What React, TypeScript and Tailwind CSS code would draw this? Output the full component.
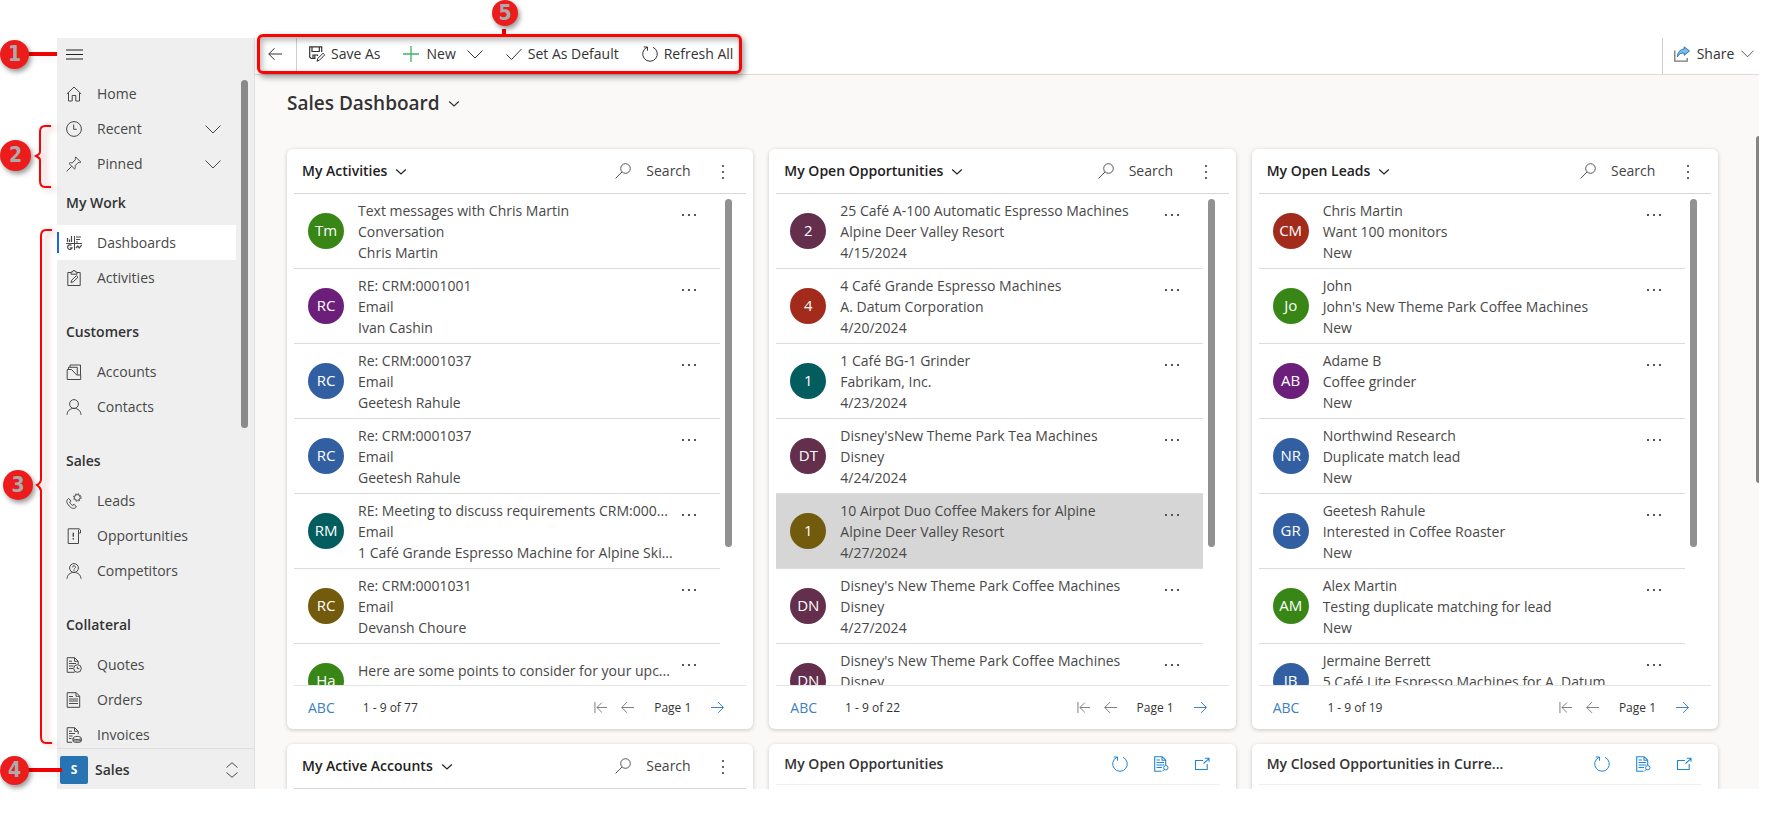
import React from "react";

type IconProps = { className?: string; children: React.ReactNode; box?: number };

function Icon({ className = "size-4", children, box = 16 }: IconProps) {
  return (
    <svg
      viewBox={`0 0 ${box} ${box}`}
      className={`shrink-0 ${className}`}
      fill="none"
      stroke="currentColor"
      strokeWidth="1"
      aria-hidden="true"
    >
      {children}
    </svg>
  );
}

const ChevronWide = ({ className = "size-4" }: { className?: string }) => (
  <Icon className={className}>
    <path d="M.5 4.500 8 12l7.500-7.500" />
  </Icon>
);

const ChevronSmall = () => (
  <Icon className="size-3" box={12}>
    <path d="M1.200 4.500 6 9l4.800-4.500" strokeWidth="1.200" />
  </Icon>
);

const SearchIcon = () => (
  <Icon className="size-4">
    <circle cx="10.500" cy="5.500" r="4.800" />
    <path d="M7 9 .6 15.400" />
  </Icon>
);

const ArrowLeft = ({ className = "size-3.5" }: { className?: string }) => (
  <Icon className={className} box={14}>
    <path d="M14 7H.8M6.500 1.200.8 7l5.700 5.800" />
  </Icon>
);

const ArrowFirst = () => (
  <Icon className="size-[13px]" box={14}>
    <path d="M1 1v12M14 7H3M8.500 1.700 3.200 7l5.300 5.300" />
  </Icon>
);

const ArrowRight = () => (
  <Icon className="size-[13px]" box={14}>
    <path d="M0 7h13.200M7.700 1.200 13.400 7l-5.700 5.800" />
  </Icon>
);

const RefreshIcon = ({ className = "size-4" }: { className?: string }) => (
  <Icon className={className}>
    <path d="M5 1.300A7.300 7.300 0 1 0 11 1.300" />
    <path d="M1.800 1h3.700v3.700" />
  </Icon>
);

const navIcons: Record<string, React.ReactNode> = {
  Home: <path d="M.8 8 8 1l7.200 7M2.500 6.500v8.500h3.700V9.500h3.600V15h3.700V6.500" />,
  Recent: (
    <>
      <circle cx="8" cy="8" r="7.400" />
      <path d="M7.700 3.500v4.800h3" />
    </>
  ),
  Pinned: (
    <path d="m.6 15.400 5-5M3 7.500l5.700 5.600c.8-1.200.8-2.300.3-3.300l3.200-3.300c.9.300 1.700.2 2.700-.3L9.700 1c-.5 1-.6 1.900-.3 2.700L6.200 7C5.200 6.500 4.100 6.600 3 7.500Z" />
  ),
  Dashboards: (
    <>
      <path d="M0 8.500h16M8.500 1v14" />
      <path d="M1.500 3v4M3.500 4.500V7M5.500 1v6M10 2h5M10 4.500h4M10 7h2" strokeWidth="1.200" />
      <path d="M5.500 10.500a2.300 2.300 0 1 0 .6 2.400H3.800M10 13l1.800-2 1.400 2 2.500-3M2 10.500v1" strokeWidth="1.200" />
    </>
  ),
  Activities: (
    <>
      <path d="M5 2.500H1.800v13h12.400v-13H11M5 4.200h6V2H9.500a1.500 1.500 0 0 0-3 0H5Z" />
      <path d="m5 12.500.7-2.300 4.700-4.600 1.600 1.600-4.700 4.600Z" />
    </>
  ),
  Accounts: (
    <>
      <path d="M1.200 5.500v10h13.500v-4.500h-4L5.500 5.500Z" />
      <path d="M2.500 5.200V3.300h8.800v7.200M4 3.200V1h10.500v10" />
    </>
  ),
  Contacts: (
    <>
      <circle cx="8" cy="5" r="4.400" />
      <path d="M1 15.800C1.200 12 4 9.400 8 9.400s6.800 2.600 7 6.400" />
    </>
  ),
  Leads: (
    <>
      <path d="M2.500 5.500C.2 7.500.3 9.300 2.400 12c2.500 3.300 5.500 4.600 8 2l-2.200-2.600-1.800.9c-1.500-.9-2.400-2-2.600-3.500l1.300-1Z" />
      <circle cx="11.300" cy="4.500" r="2.900" />
      <circle cx="11.300" cy="4.500" r="3.800" strokeDasharray="1.500 1.500" />
    </>
  ),
  Opportunities: (
    <>
      <path d="M12.500 4.500v11H2.200V.8h11M12.500 5h2V2a1.200 1.200 0 0 0-2 0Z" />
      <path d="M7.300 4.800v4M7.300 10v1.500" strokeWidth="1.400" />
    </>
  ),
  Competitors: (
    <>
      <circle cx="8" cy="5" r="4.400" />
      <path d="M1 15.800C1.200 12 4 9.400 8 9.400s6.800 2.600 7 6.400M6.500 4.300c0-2 3-2 3 0C9.500 5.300 8 5.300 8 6.500M8 7v1" />
    </>
  ),
  Quotes: (
    <>
      <path d="M8.500 15.300H1.200V.7h7.500l3.500 3.500v3M8.500.8v3.500h3.600" />
      <path d="M3 6.500h7M3 9h4.500M3 11.500h4M3 4.200h3" />
      <circle cx="11.500" cy="11.500" r="3.800" />
      <path d="M11.300 9.500v2.200h2" />
    </>
  ),
  Orders: (
    <>
      <path d="M1.200.7h9l3.500 3.500v11.100H1.200ZM10 .8v3.500h3.600" />
      <path d="M3 4.500h4M3 7h9M3 9h9M3 11.500h9" />
    </>
  ),
  Invoices: (
    <>
      <path d="M6 15.300H1.200V.7h7.500l3.500 3.500v3M8.500.8v3.500h3.600" />
      <path d="M3 6.500h6M3 9h3.500M3 11.500h2.500M3 4.200h3" />
      <path d="M7 11.300c0-2.500 8.300-2.500 8.300 0v2.900c0 1.600-8.300 1.600-8.300 0ZM7 11.300c0 1.600 8.300 1.600 8.300 0M7 12.800c0 1.600 8.300 1.600 8.300 0" />
    </>
  ),
};

function NavItem({ label, active, expandable }: { label: string; active?: boolean; expandable?: boolean }) {
  return (
    <li>
      <a
        href="#"
        aria-current={active ? "page" : undefined}
        className={`relative flex h-[35px] items-center gap-[15px] pr-[15px] pl-[9px] ${active ? "bg-white" : ""}`}
      >
        {active && <span className="absolute top-[7px] left-0 h-[21px] w-[2px] bg-[#1666ee]" />}
        <Icon className="size-4">{navIcons[label]}</Icon>
        <span className="grow">{label}</span>
        {expandable && <ChevronWide />}
      </a>
    </li>
  );
}

const navGroups = [
  { title: "My Work", items: ["Dashboards", "Activities"] },
  { title: "Customers", items: ["Accounts", "Contacts"] },
  { title: "Sales", items: ["Leads", "Opportunities", "Competitors"] },
  { title: "Collateral", items: ["Quotes", "Orders", "Invoices"] },
];

function Sidebar() {
  return (
    <aside className="flex w-[198px] shrink-0 flex-col border-r border-[#e0e0e0] bg-[#efefef] text-[#484848]">
      <button aria-label="Toggle navigation" className="flex h-[38px] shrink-0 items-center pb-[6px] pl-[9px] text-[#222]">
        <Icon className="h-[11px] w-[17px]">
          <path d="M-5 1.500h26M-5 8h26M-5 14.500h26" strokeWidth="1.700" />
        </Icon>
      </button>
      <div className="flex min-h-0 grow overflow-hidden">
        <nav className="grow">
          <ul>
            <NavItem label="Home" />
            <NavItem label="Recent" expandable />
            <NavItem label="Pinned" expandable />
          </ul>
          {navGroups.map((group, i) => (
            <section key={group.title} className={i > 0 ? "mt-[15px]" : ""}>
              <h2 className="flex h-11 items-center pl-[9px] font-semibold text-[#333]">{group.title}</h2>
              <ul>
                {group.items.map((item) => (
                  <NavItem key={item} label={item} active={item === "Dashboards"} />
                ))}
              </ul>
            </section>
          ))}
        </nav>
        <div className="w-[18px] shrink-0 pt-1 pl-[5px]">
          <div className="h-[348px] w-[7px] rounded-full bg-[#8a8a8a]" />
        </div>
      </div>
      <button className="flex h-[41px] shrink-0 items-center border-t border-[#dedede] pt-[2px] pr-[14px] pl-[3px] text-left">
        <span className="flex size-7 items-center justify-center rounded-xs bg-[#2874b2] text-xs font-bold text-white">S</span>
        <span className="grow pl-[7px] font-semibold text-[#333]">Sales</span>
        <Icon className="size-4">
          <path d="M2.500 5.500 8 .7l5.500 4.800M2.500 10.500 8 15.300l5.500-4.800" />
        </Icon>
      </button>
    </aside>
  );
}

function Toolbar() {
  return (
    <header className="flex h-[37px] shrink-0 items-stretch border-b border-[#dddcdb] bg-white text-[#333]">
      <button aria-label="Back" className="flex w-[42px] items-center border-r border-[#cfcfcf] pb-1 pl-[13px]">
        <ArrowLeft />
      </button>
      <div className="flex grow items-center gap-[23px] pb-[5px] pl-3">
        <button className="flex items-center gap-[6px]">
          <Icon>
            <path d="M6.500 12.500H2.200L.7 11V.8h12V6M3 .8v4.700h7.300V.8M4 12.500V9h4.500v1M5.800 9.500v2.500" strokeWidth="1.200" />
            <path d="m8 15.200.8-2.700 5.200-5.300 1.700 1.700-5.200 5.300Z" />
          </Icon>
          Save As
        </button>
        <button className="flex items-center gap-[7px]">
          <Icon className="size-4 text-[#3bb565]">
            <path d="M0 8h16M8 0v16" strokeWidth="1.300" />
          </Icon>
          <span className="pr-1">New</span>
          <ChevronWide />
        </button>
        <button className="flex items-center gap-[6px]">
          <Icon>
            <path d="m.5 8.500 5 5L15.500 3" />
          </Icon>
          Set As Default
        </button>
        <button className="flex items-center gap-[6px]">
          <RefreshIcon />
          Refresh All
        </button>
      </div>
      <button className="flex w-[97px] items-center justify-between border-l border-[#cfcfcf] pr-[5px] pb-[5px] pl-[11px]">
        <Icon>
          <path d="M.8 4.500v10.700h12.400V12" strokeWidth="1.300" stroke="#777" />
          <path d="M10.200.8 15.500 5l-5.300 4.300V7C7 6.800 4.800 7.700 3.300 11 3.500 6.500 6 3.300 10.200 3Z" fill="#7cbdec" stroke="#2f77b8" />
        </Icon>
        <span>Share</span>
        <ChevronWide className="size-[13px]" />
      </button>
    </header>
  );
}

type Row = { initials: string; color: string; lines: string[]; selected?: boolean };

const GREEN = "bg-[#388716]";
const PURPLE = "bg-[#6b1f7a]";
const BLUE = "bg-[#325fa2]";
const TEAL = "bg-[#035d5f]";
const BROWN = "bg-[#735b0d]";
const PLUM = "bg-[#632f4c]";
const RED = "bg-[#a32b1b]";

const activities: Row[] = [
  { initials: "Tm", color: GREEN, lines: ["Text messages with Chris Martin", "Conversation", "Chris Martin"] },
  { initials: "RC", color: PURPLE, lines: ["RE: CRM:0001001", "Email", "Ivan Cashin"] },
  { initials: "RC", color: BLUE, lines: ["Re: CRM:0001037", "Email", "Geetesh Rahule"] },
  { initials: "RC", color: BLUE, lines: ["Re: CRM:0001037", "Email", "Geetesh Rahule"] },
  { initials: "RM", color: TEAL, lines: ["RE: Meeting to discuss requirements CRM:000...", "Email", "1 Café Grande Espresso Machine for Alpine Ski..."] },
  { initials: "RC", color: BROWN, lines: ["Re: CRM:0001031", "Email", "Devansh Choure"] },
  { initials: "Ha", color: GREEN, lines: ["Here are some points to consider for your upc...", "\u00a0"] },
];

const opportunities: Row[] = [
  { initials: "2", color: PLUM, lines: ["25 Café A-100 Automatic Espresso Machines", "Alpine Deer Valley Resort", "4/15/2024"] },
  { initials: "4", color: RED, lines: ["4 Café Grande Espresso Machines", "A. Datum Corporation", "4/20/2024"] },
  { initials: "1", color: TEAL, lines: ["1 Café BG-1 Grinder", "Fabrikam, Inc.", "4/23/2024"] },
  { initials: "DT", color: PLUM, lines: ["Disney'sNew Theme Park Tea Machines", "Disney", "4/24/2024"] },
  { initials: "1", color: BROWN, lines: ["10 Airpot Duo Coffee Makers for Alpine", "Alpine Deer Valley Resort", "4/27/2024"], selected: true },
  { initials: "DN", color: PLUM, lines: ["Disney's New Theme Park Coffee Machines", "Disney", "4/27/2024"] },
  { initials: "DN", color: PLUM, lines: ["Disney's New Theme Park Coffee Machines", "Disney", "\u00a0"] },
];

const leads: Row[] = [
  { initials: "CM", color: RED, lines: ["Chris Martin", "Want 100 monitors", "New"] },
  { initials: "Jo", color: GREEN, lines: ["John", "John's New Theme Park Coffee Machines", "New"] },
  { initials: "AB", color: PURPLE, lines: ["Adame B", "Coffee grinder", "New"] },
  { initials: "NR", color: BLUE, lines: ["Northwind Research", "Duplicate match lead", "New"] },
  { initials: "GR", color: BLUE, lines: ["Geetesh Rahule", "Interested in Coffee Roaster", "New"] },
  { initials: "AM", color: GREEN, lines: ["Alex Martin", "Testing duplicate matching for lead", "New"] },
  { initials: "JB", color: BLUE, lines: ["Jermaine Berrett", "5 Café Lite Espresso Machines for A. Datum", "\u00a0"] },
];

const CARD = "flex min-w-0 flex-col rounded-md bg-white px-[7px] shadow-[0_1px_4px_rgba(0,0,0,0.2)]";

function ListHeader({ title }: { title: string }) {
  return (
    <div className="flex h-[45px] shrink-0 items-center border-b border-[#d6d6d6] pr-[21px] pl-2">
      <button className="flex items-center gap-2 font-semibold text-[#222]">
        {title}
        <ChevronSmall />
      </button>
      <label className="ml-auto flex items-center gap-[15px] text-[#555]">
        <SearchIcon />
        <input
          type="text"
          aria-label={`Search ${title}`}
          placeholder="Search"
          className="w-[75px] bg-transparent outline-none placeholder:text-[#444] placeholder:opacity-100"
        />
      </label>
      <button aria-label={`More commands for ${title}`} className="text-[#666]">
        <svg viewBox="0 0 4 16" className="h-4 w-1" fill="currentColor" aria-hidden="true">
          <rect x="1" y="2" width="2" height="2" />
          <rect x="1" y="8" width="2" height="2" />
          <rect x="1" y="14" width="2" height="2" />
        </svg>
      </button>
    </div>
  );
}

function ListRow({ row }: { row: Row }) {
  return (
    <li className={`flex h-[75px] items-center border-b border-[#dcdcdc] pr-[23px] pl-[14px] ${row.selected ? "bg-[#d6d6d6]" : ""}`}>
      <span className={`flex size-9 shrink-0 items-center justify-center rounded-full text-[15px] text-white ${row.color}`}>
        {row.initials}
      </span>
      <div className="min-w-0 grow pl-[14px] leading-[21px] whitespace-nowrap">
        {row.lines.map((line, i) => (
          <p key={i}>{line}</p>
        ))}
      </div>
      <button aria-label={`More actions for ${row.lines[0]}`} className="-mt-8 text-[#555]">
        <svg viewBox="0 0 16 4" className="h-1 w-4" fill="currentColor" aria-hidden="true">
          <rect x="1" y="1" width="2" height="2" />
          <rect x="7" y="1" width="2" height="2" />
          <rect x="13" y="1" width="2" height="2" />
        </svg>
      </button>
    </li>
  );
}

function ListCard({ title, rows, total }: { title: string; rows: Row[]; total: number }) {
  return (
    <section className={CARD}>
      <ListHeader title={title} />
      <div className="flex h-[491px] overflow-hidden">
        <ul className="min-w-0 grow">
          {rows.map((row, i) => (
            <ListRow key={i} row={row} />
          ))}
        </ul>
        <div className="w-[26px] shrink-0 pt-[5px] pl-[5px]">
          <div className="h-[348px] w-[7px] rounded-full bg-[#919191]" />
        </div>
      </div>
      <footer className="flex h-11 items-center border-t border-[#e4e4e4] pr-[22px] pl-[14px] text-xs text-[#333]">
        <button className="text-sm text-[#3d7fc1]">ABC</button>
        <span className="pl-7">1 - 9 of {total}</span>
        <div className="ml-auto flex items-center text-[#777]">
          <button aria-label="First page">
            <ArrowFirst />
          </button>
          <button aria-label="Previous page" className="pl-[14px]">
            <ArrowLeft className="size-[13px]" />
          </button>
          <span className="px-5 text-[#333]">Page 1</span>
          <button aria-label="Next page" className="text-[#2f7ac5]">
            <ArrowRight />
          </button>
        </div>
      </footer>
    </section>
  );
}

function ChartCard({ title }: { title: string }) {
  return (
    <section className={CARD}>
      <div className="mr-[9px] flex h-[41px] shrink-0 items-center border-b border-[#efefef] pr-[10px] pl-2">
        <h3 className="grow font-semibold text-[#333]">{title}</h3>
        <div className="flex items-center gap-[25px] text-[#1f86d6]">
          <button aria-label="Refresh">
            <RefreshIcon />
          </button>
          <button aria-label="View records">
            <Icon>
              <path d="M8.500 15.300H1.700V.7h7.500l3.500 3.500v5M9 .8v3.500h3.600M3.500 4h3.500M3.500 6.500H11M3.500 9H11M3.500 11.500H9" strokeWidth="1.100" />
              <circle cx="12.800" cy="11.700" r="2.200" />
              <path d="m11.300 13.300-2 2" />
            </Icon>
          </button>
          <button aria-label="Expand">
            <Icon>
              <path d="M9 4.500H1.500v9h11.700V8M9.500 7.500l5.200-4.700M11 2.300h4v3.500" strokeWidth="1.100" />
            </Icon>
          </button>
        </div>
      </div>
    </section>
  );
}

function Callout({ n, className }: { n: number; className: string }) {
  return (
    <span
      className={`absolute flex items-center justify-center rounded-full bg-[#ec1c1c] font-['Liberation_Sans_Narrow','DejaVu_Sans_Condensed',sans-serif] text-[21px] leading-none font-bold text-[#ababab] shadow-[2px_3px_5px_rgba(0,0,0,0.4)] ${className}`}
    >
      {n}
    </span>
  );
}

function Callouts() {
  return (
    <div className="pointer-events-none absolute inset-0">
      <span className="absolute top-[52px] left-[28px] h-1 w-[29px] bg-[#f00000] shadow-md" />
      <span className="absolute top-[768px] left-[28px] h-1 w-[34px] bg-[#f00000] shadow-md" />
      <span className="absolute top-[29px] left-[502px] h-2 w-1 bg-[#f00000]" />
      <Callout n={1} className="top-[40px] left-0 size-[29px]" />
      <Callout n={2} className="top-[140px] left-0 size-[31px]" />
      <Callout n={3} className="top-[470px] left-[3px] size-[30px]" />
      <Callout n={4} className="top-[756px] left-0 size-[29px]" />
      <Callout n={5} className="top-0 left-[492px] size-[26px]" />
      <div className="absolute top-[34px] left-[257px] h-10 w-[485px] rounded-md border-3 border-[#fb0303] shadow-[2px_3px_6px_rgba(0,0,0,0.4),inset_2px_3px_6px_rgba(0,0,0,0.3)]" />
      <svg
        viewBox="0 0 24 640"
        className="absolute top-[118px] left-[32px] h-[640px] w-6 [filter:drop-shadow(5px_2px_3px_rgba(150,0,0,0.3))]"
        fill="none"
        stroke="#fb0303"
        strokeWidth="2"
        aria-hidden="true"
      >
        <path d="M19 8h-6Q8 8 8 14v20q0 2-4 4 4 2 4 4v21q0 6 5 6h6" />
        <path d="M20 112h-6q-5 0-5 6v243q0 4-4 6 4 3 4 6v246q0 6 5 6h6" />
      </svg>
    </div>
  );
}

export default function App() {
  return (
    <div className="relative h-screen overflow-hidden bg-white pt-[38px] pr-[6px] pb-[30px] pl-[57px] font-['Open_Sans','Noto_Sans',sans-serif] text-sm text-[#484848]">
      <div className="flex h-full overflow-hidden">
        <Sidebar />
        <div className="flex min-w-0 grow flex-col bg-[#faf9f8]">
          <Toolbar />
          <main className="flex min-h-0 grow overflow-hidden pl-8">
            <div className="min-w-0 grow">
              <h1 className="flex h-[74px] items-start pt-[15px]">
                <button className="flex items-center gap-2 text-[19px] leading-[26px] font-semibold text-[#333]">
                  Sales Dashboard
                  <ChevronSmall />
                </button>
              </h1>
              <div className="grid grid-cols-3 gap-x-4 gap-y-[15px]">
                <ListCard title="My Activities" rows={activities} total={77} />
                <ListCard title="My Open Opportunities" rows={opportunities} total={22} />
                <ListCard title="My Open Leads" rows={leads} total={19} />
                <section className={CARD}>
                  <ListHeader title="My Active Accounts" />
                  <div className="h-40" />
                </section>
                <ChartCard title="My Open Opportunities" />
                <ChartCard title="My Closed Opportunities in Curre..." />
              </div>
            </div>
            <div className="w-[41px] shrink-0 pt-[61px] pl-[38px]">
              <div className="h-[347px] w-[3px] rounded-l-full bg-[#858585]" />
            </div>
          </main>
        </div>
      </div>
      <Callouts />
    </div>
  );
}
